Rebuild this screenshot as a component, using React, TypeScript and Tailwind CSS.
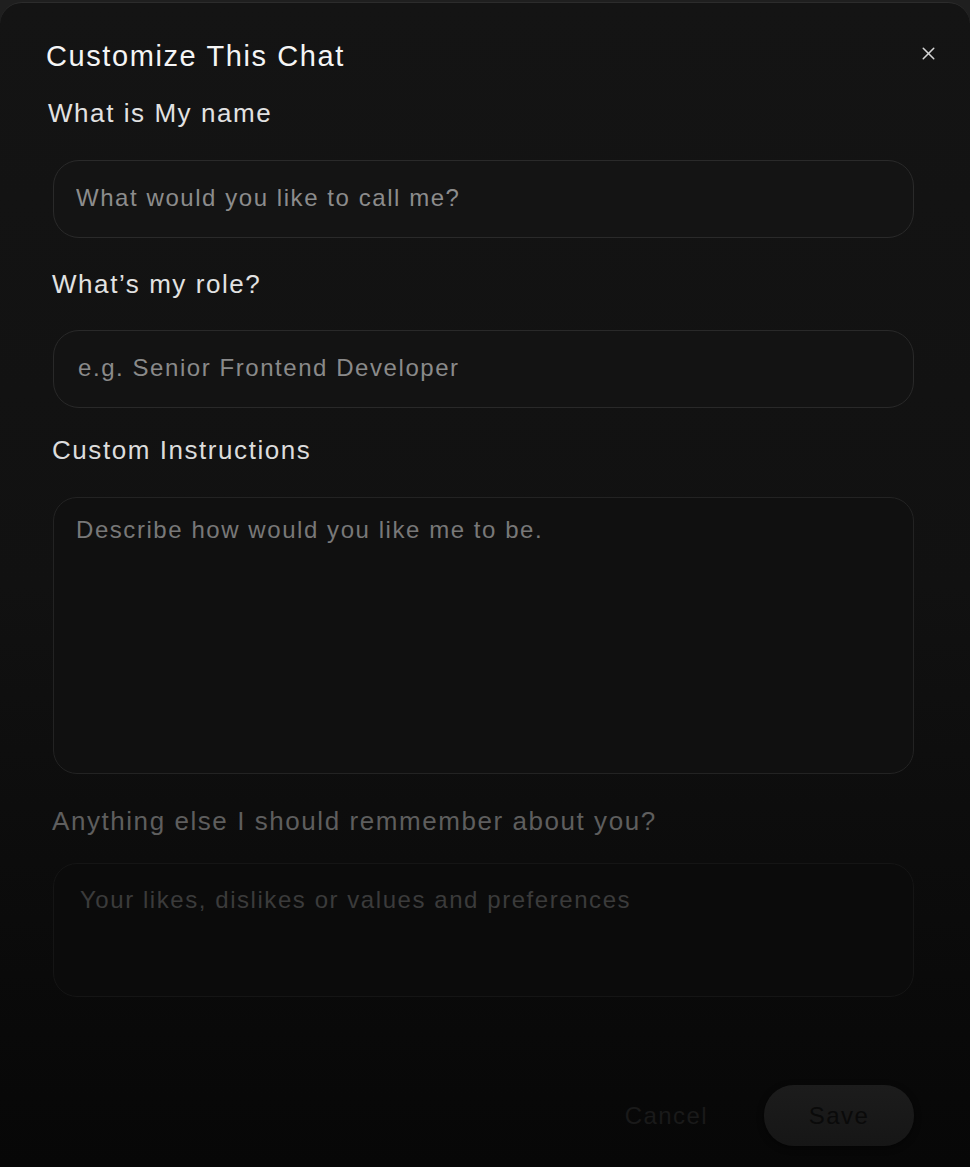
import { X } from "lucide-react";

const font = { fontFamily: '"Liberation Sans", Arial, sans-serif' };

export default function App() {
  return (
    <div className="min-h-[1167px] bg-[#1f1f1f] pt-[2px]" style={font}>
      <div className="relative min-h-[1165px] rounded-t-[22px] border-t border-[#2c2c2c] bg-gradient-to-b from-[#141414] via-[#111111] to-[#070707]">
        <button className="absolute right-[31px] top-[40px] text-[#d4d4d4]">
          <X size={21} strokeWidth={1.75} />
        </button>

        <div className="flex flex-col pl-[46px] pr-[56px] pt-[35px]">
          <h2 className="text-[29px] leading-[36px] tracking-[0.055em] text-[#f5f5f5]">
            Customize This Chat
          </h2>

          <label className="ml-[2px] mt-[24px] text-[26px] leading-[30px] tracking-[0.06em] text-[#e2e2e2]">
            What is My name
          </label>
          <input
            placeholder="What would you like to call me?"
            className="ml-[7px] mt-[32px] h-[78px] rounded-[26px] border border-[#2a2a2a] bg-[#141414] px-[22px] pb-[2px] text-[24px] tracking-[0.065em] text-[#e2e2e2] outline-none placeholder:text-[#8c8c8c]"
          />

          <label className="ml-[6px] mt-[31px] text-[26px] leading-[30px] tracking-[0.06em] text-[#e2e2e2]">
            What’s my role?
          </label>
          <input
            placeholder="e.g. Senior Frontend Developer"
            className="ml-[7px] mt-[31px] h-[78px] rounded-[26px] border border-[#292929] bg-[#131313] px-[24px] pb-[2px] text-[24px] tracking-[0.065em] text-[#e2e2e2] outline-none placeholder:text-[#8a8a8a]"
          />

          <label className="ml-[6px] mt-[27px] text-[26px] leading-[30px] tracking-[0.06em] text-[#dcdcdc]">
            Custom Instructions
          </label>
          <textarea
            placeholder="Describe how would you like me to be."
            className="ml-[7px] mt-[32px] h-[277px] resize-none rounded-[24px] border border-[#232323] bg-[#101010] px-[22px] pt-[17px] text-[24px] leading-[30px] tracking-[0.065em] text-[#e2e2e2] outline-none placeholder:text-[#787878]"
          />

          <label className="ml-[6px] mt-[32px] text-[26px] leading-[30px] tracking-[0.06em] text-[#5e5e5e]">
            Anything else I should remmember about you?
          </label>
          <textarea
            placeholder="Your likes, dislikes or values and preferences"
            className="ml-[7px] mt-[27px] h-[134px] resize-none rounded-[24px] border border-[#151515] bg-[#0b0b0b] px-[26px] pt-[21px] text-[24px] leading-[30px] tracking-[0.065em] text-[#e2e2e2] outline-none placeholder:text-[#3b3b3b]"
          />

          <div className="mt-[88px] flex items-center justify-end gap-[56px]">
            <button className="text-[24px] tracking-[0.06em] text-[#1a1a1a]">Cancel</button>
            <button className="h-[61px] w-[150px] rounded-[30px] bg-gradient-to-b from-[#1c1c1c] to-[#161616] text-[24px] tracking-[0.06em] text-[#0a0a0a] shadow-[0_2px_6px_rgba(0,0,0,0.5)]">
              Save
            </button>
          </div>
        </div>
      </div>
    </div>
  );
}
